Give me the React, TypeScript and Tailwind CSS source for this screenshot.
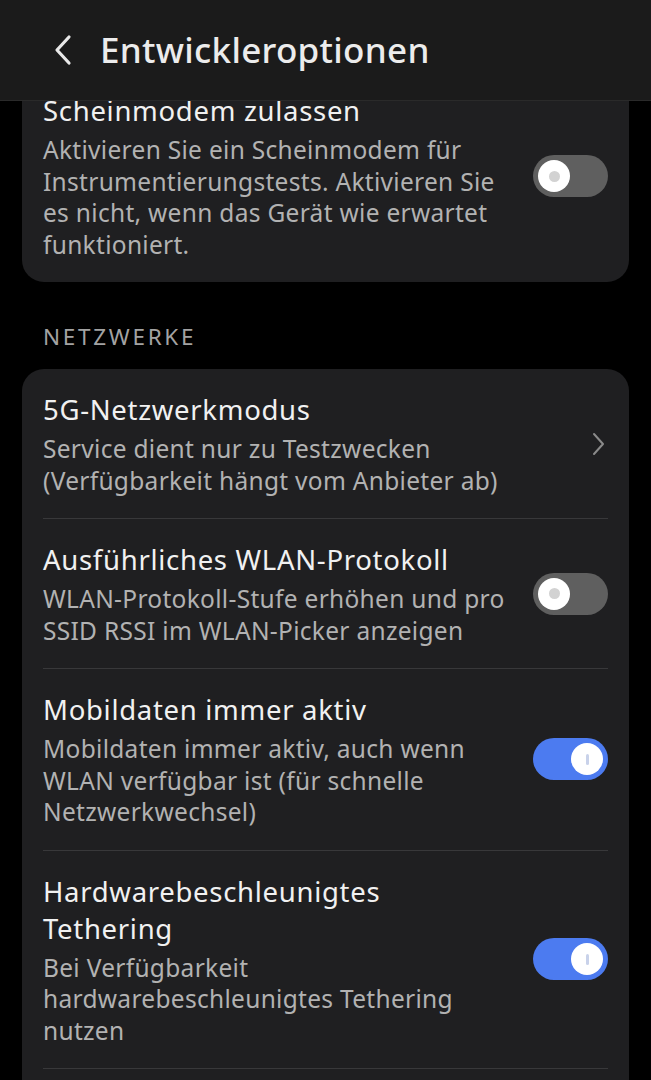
import React from "react";

const Toggle = ({ on }: { on: boolean }) =>
  on ? (
    <div className="relative w-[75px] h-[42px] rounded-full bg-[#4c7bf0] shrink-0">
      <div className="absolute right-[5px] top-[5px] w-[32px] h-[32px] rounded-full bg-white flex items-center justify-center">
        <div className="w-[3px] h-[11px] rounded-full bg-[#c9d2ea]" />
      </div>
    </div>
  ) : (
    <div className="relative w-[75px] h-[42px] rounded-full bg-[#5f5f5f] shrink-0">
      <div className="absolute left-[5px] top-[5px] w-[32px] h-[32px] rounded-full bg-white flex items-center justify-center">
        <div className="w-[11px] h-[11px] rounded-full bg-[#d2d2d2]" />
      </div>
    </div>
  );

const Chevron = () => (
  <div className="w-[75px] shrink-0 flex justify-end pr-[3px]">
    <svg width="14" height="24" viewBox="0 0 14 24" fill="none">
      <path d="M3 2 L12 12 L3 22" stroke="#8a8a8a" strokeWidth="2" strokeLinecap="round" strokeLinejoin="round" />
    </svg>
  </div>
);

type RowProps = {
  title: string[];
  desc: string[];
  right: React.ReactNode;
  divider?: boolean;
};

const Row = ({ title, desc, right, divider }: RowProps) => (
  <div>
    {divider && <div className="mx-[21px] h-px bg-[#38383a]" />}
    <div className="flex items-center px-[21px] py-[22px] gap-[4px]">
      <div className="flex-1 min-w-0">
        <div className="text-[27.5px] leading-[37px] tracking-[0.7px] text-[#f1f1f1]">
          {title.map((t, i) => (
            <div key={i} className="whitespace-nowrap">{t}</div>
          ))}
        </div>
        <div className="mt-[5px] text-[24.5px] leading-[31.5px] tracking-[0.3px] text-[#b2b2b2]">
          {desc.map((d, i) => (
            <div key={i} className="whitespace-nowrap">{d}</div>
          ))}
        </div>
      </div>
      {right}
    </div>
  </div>
);

export default function App() {
  return (
    <div
      className="w-[651px] h-[1080px] bg-black overflow-hidden flex flex-col"
      style={{ fontFamily: "'Noto Sans', Roboto, sans-serif" }}
    >
      <header className="h-[101px] shrink-0 bg-[#1b1b1b] border-b border-[#2a2a2a] flex items-center relative z-10">
        <div className="w-[100px] flex justify-end pr-[27px]">
          <svg width="20" height="32" viewBox="0 0 20 32" fill="none">
            <path d="M16 3 L4 16 L16 29" stroke="#e8e8e8" strokeWidth="3.2" strokeLinecap="round" strokeLinejoin="round" />
          </svg>
        </div>
        <h1 className="text-[35px] leading-[40px] tracking-[0.3px] text-[#ececec] font-medium">Entwickleroptionen</h1>
      </header>
      <div className="flex-1 overflow-hidden">
        <div className="-mt-[31px] px-[22px]">
          <div className="bg-[#1f1f21] rounded-[22px]">
            <Row
              title={["Scheinmodem zulassen"]}
              desc={[
                "Aktivieren Sie ein Scheinmodem für",
                "Instrumentierungstests. Aktivieren Sie",
                "es nicht, wenn das Gerät wie erwartet",
                "funktioniert.",
              ]}
              right={<Toggle on={false} />}
            />
          </div>
          <div className="h-[87px] pt-[40px] px-[21px]">
            <div className="text-[22.5px] leading-[30px] tracking-[2.7px] text-[#a3a3a3]">NETZWERKE</div>
          </div>
          <div className="bg-[#1f1f21] rounded-[22px]">
            <Row
              title={["5G-Netzwerkmodus"]}
              desc={["Service dient nur zu Testzwecken", "(Verfügbarkeit hängt vom Anbieter ab)"]}
              right={<Chevron />}
            />
            <Row
              divider
              title={["Ausführliches WLAN-Protokoll"]}
              desc={["WLAN-Protokoll-Stufe erhöhen und pro", "SSID RSSI im WLAN-Picker anzeigen"]}
              right={<Toggle on={false} />}
            />
            <Row
              divider
              title={["Mobildaten immer aktiv"]}
              desc={[
                "Mobildaten immer aktiv, auch wenn",
                "WLAN verfügbar ist (für schnelle",
                "Netzwerkwechsel)",
              ]}
              right={<Toggle on={true} />}
            />
            <Row
              divider
              title={["Hardwarebeschleunigtes", "Tethering"]}
              desc={[
                "Bei Verfügbarkeit",
                "hardwarebeschleunigtes Tethering",
                "nutzen",
              ]}
              right={<Toggle on={true} />}
            />
            <div className="mx-[21px] h-px bg-[#38383a]" />
            <div className="h-[60px]" />
          </div>
        </div>
      </div>
    </div>
  );
}
